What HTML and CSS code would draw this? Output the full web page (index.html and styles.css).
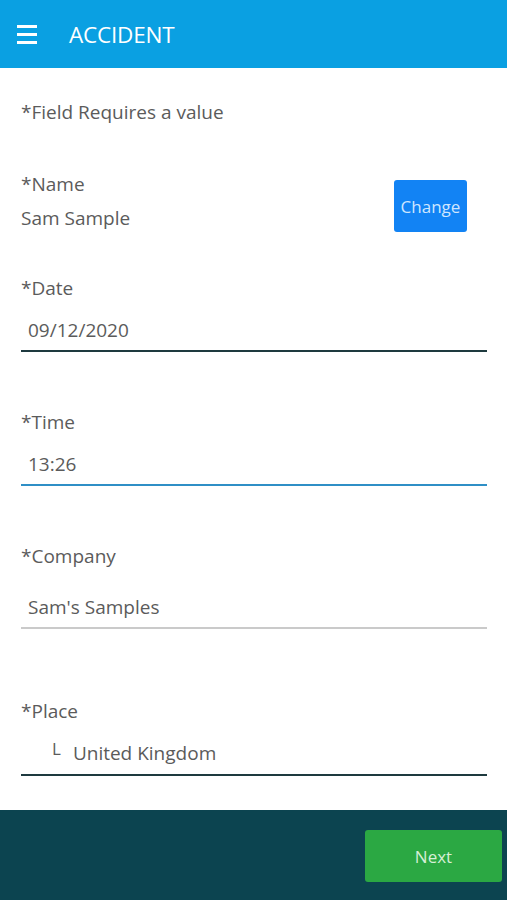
FILE: index.html
```html
<!DOCTYPE html>
<html>
<head>
<meta charset="utf-8">
<link rel="stylesheet" href="styles.css">
</head>
<body>
<div class="app">
  <header class="topbar">
    <span class="menu"><i></i><i></i><i></i></span>
    <span class="title">ACCIDENT</span>
  </header>
  <main class="form">
    <p class="note">*Field Requires a value</p>
    <div class="name-row">
      <div>
        <div class="label name-label">*Name</div>
        <div class="static">Sam Sample</div>
      </div>
      <button class="change">Change</button>
    </div>
    <div class="field date">
      <div class="label">*Date</div>
      <div class="value dark">09/12/2020</div>
    </div>
    <div class="field time">
      <div class="label">*Time</div>
      <div class="value blue">13:26</div>
    </div>
    <div class="field company">
      <div class="label">*Company</div>
      <div class="value grey">Sam's Samples</div>
    </div>
    <div class="field place">
      <div class="label">*Place</div>
      <div class="value dark tree"><span class="corner">L</span>United Kingdom</div>
    </div>
  </main>
  <footer class="bottombar">
    <button class="next">Next</button>
  </footer>
</div>
</body>
</html>
```
FILE: styles.css
```css
* { box-sizing: border-box; }
html, body { margin: 0; padding: 0; }
body {
  font-family: "Open Sans", "Noto Sans", sans-serif;
  color: #5b5b5b;
  background: #fff;
}
.app {
  height: 900px;
  display: flex;
  flex-direction: column;
}
.topbar {
  height: 68px;
  background: #0aa0e2;
  display: flex;
  align-items: center;
  padding-left: 17px;
  flex-shrink: 0;
}
.menu {
  width: 20px;
  display: flex;
  flex-direction: column;
  gap: 5px;
}
.menu i {
  display: block;
  height: 3px;
  background: #fff;
}
.title {
  margin-left: 32px;
  color: #fff;
  font-size: 22.5px;
  letter-spacing: -0.2px;
}
.form {
  flex: 1;
  padding: 30px 20px 0 21px;
}
.note {
  margin: 0;
  font-size: 19px;
  line-height: 28px;
}
.name-row {
  margin-top: 44px;
  display: flex;
  justify-content: space-between;
  align-items: flex-start;
}
.label, .static, .value {
  font-size: 19px;
  line-height: 28px;
}
.name-label { margin-bottom: 6px; }
.change {
  margin-top: 10px;
  margin-right: 20px;
  width: 73px;
  height: 52px;
  border: 0;
  border-radius: 3px;
  background: #1283f4;
  color: #cfe6ff;
  font-family: inherit;
  font-size: 17px;
  padding: 0;
}
.field { margin-top: 56px; }
.field.date { margin-top: 42px; }
.field.place { margin-top: 68px; }
.value {
  margin-top: 14px;
  padding: 0 0 6px 7px;
  border-bottom: 2px solid #1e3a3f;
}
.company .value { margin-top: 23px; }
.value.blue { border-bottom-color: #2f8fc6; }
.value.grey { border-bottom-color: #cacaca; }
.value.tree { padding-left: 31px; }
.corner {
  font-size: 17px;
  margin-right: 12px;
  position: relative;
  top: -5px;
}
.bottombar {
  height: 90px;
  flex-shrink: 0;
  background: #0c4450;
  display: flex;
  justify-content: flex-end;
  align-items: flex-start;
  padding: 20px 5px 0 0;
}
.next {
  width: 137px;
  height: 52px;
  border: 0;
  border-radius: 3px;
  background: #2ba843;
  color: #d6efd6;
  font-family: inherit;
  font-size: 17px;
}
```
